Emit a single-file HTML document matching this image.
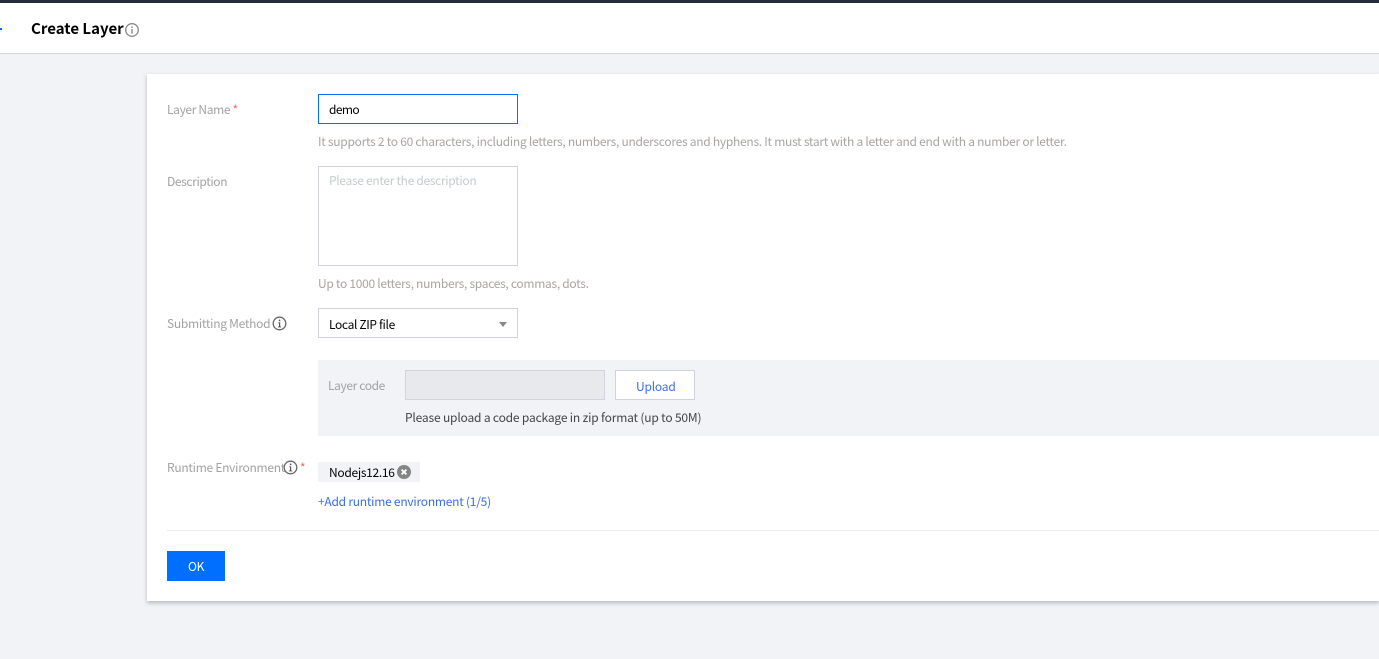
<!DOCTYPE html>
<html><head><meta charset="utf-8">
<style>
html,body{margin:0;padding:0}
body{width:1379px;height:659px;position:relative;overflow:hidden;background:#f2f3f7;font-family:"Noto Sans CJK SC","Liberation Sans",sans-serif;font-size:12px;color:#000;letter-spacing:-.27px}
.a{position:absolute;white-space:nowrap;line-height:18px}
.b{position:absolute;box-sizing:border-box}
.l{color:#a2a2a2}
.h{color:#a8a4a2}
svg{position:absolute;display:block}
</style></head><body>
<div class="b" style="left:0;top:0;width:1379px;height:3px;background:#242d3d"></div>
<div class="b" style="left:0;top:3px;width:1379px;height:51px;background:#fff;border-bottom:1px solid #d5d6de"></div>
<div class="b" style="left:0;top:28px;width:2px;height:2px;background:#006eff"></div>
<div class="a" style="left:31px;top:18px;font-size:15px;line-height:22px;font-weight:700;color:#000;letter-spacing:0">Create Layer</div>
<svg style="left:125px;top:23px" width="14" height="14" viewBox="0 0 14 14"><circle cx="7" cy="7" r="6.3" fill="none" stroke="#888" stroke-width="1.3"/><rect x="6.3" y="6" width="1.4" height="4.6" fill="#888"/><rect x="6.3" y="3.4" width="1.4" height="1.5" fill="#888"/></svg>

<div class="b" style="left:147px;top:74px;width:1232px;height:527px;background:#fff;box-shadow:0 2px 4px rgba(54,58,80,.32)"></div>

<div class="a l" style="left:167px;top:101px;letter-spacing:-.35px">Layer Name <span style="color:#f0696b">*</span></div>
<div class="b" style="left:318px;top:94px;width:200px;height:30px;border:1px solid #006eff;background:#fff"></div>
<div class="a" style="left:329px;top:101px;letter-spacing:-.6px">demo</div>
<div class="a h" style="left:318px;top:133px">It supports 2 to 60 characters, including letters, numbers, underscores and hyphens. It must start with a letter and end with a number or letter.</div>

<div class="a l" style="left:167px;top:173px;letter-spacing:-.37px">Description</div>
<div class="b" style="left:318px;top:166px;width:200px;height:100px;border:1px solid #cfd2dc;background:#fff"></div>
<div class="a" style="left:329px;top:172px;color:#c6cbd0;letter-spacing:-.31px">Please enter the description</div>
<div class="a h" style="left:318px;top:275px;letter-spacing:-.29px">Up to 1000 letters, numbers, spaces, commas, dots.</div>

<div class="a l" style="left:167px;top:315px">Submitting Method</div>
<svg style="left:272px;top:316px" width="15" height="15" viewBox="0 0 15 15"><circle cx="7.5" cy="7.5" r="6.3" fill="none" stroke="#666" stroke-width="1.3"/><path d="M6.3 6.4H8.2V10.5H9.2V11.4H6V10.5H7V7.3H6.3Z" fill="#555"/><rect x="6.8" y="3.6" width="1.5" height="1.6" fill="#555"/></svg>
<div class="b" style="left:318px;top:308px;width:200px;height:30px;border:1px solid #cfd2dc;background:#fff"></div>
<div class="a" style="left:329px;top:316px;letter-spacing:-.35px">Local ZIP file</div>
<div class="b" style="left:499px;top:322px;width:0;height:0;border-left:4px solid transparent;border-right:4px solid transparent;border-top:5px solid #888"></div>

<div class="b" style="left:318px;top:360px;width:1061px;height:76px;background:#f2f3f7"></div>
<div class="a l" style="left:328px;top:377px;letter-spacing:-.37px">Layer code</div>
<div class="b" style="left:405px;top:370px;width:200px;height:30px;background:#e7e9ed;border:1px solid #d0d4dd"></div>
<div class="b" style="left:615px;top:370px;width:80px;height:30px;background:#fff;border:1px solid #cfd2dc"></div>
<div class="a" style="left:636px;top:378px;color:#3d6cf0;letter-spacing:-.2px">Upload</div>
<div class="a" style="left:405px;top:409px;color:#444;letter-spacing:-.175px">Please upload a code package in zip format (up to 50M)</div>

<div class="a l" style="left:167px;top:459px">Runtime Environment</div>
<svg style="left:283px;top:460px" width="15" height="15" viewBox="0 0 15 15"><circle cx="7.5" cy="7.5" r="6.3" fill="none" stroke="#666" stroke-width="1.3"/><path d="M6.3 6.4H8.2V10.5H9.2V11.4H6V10.5H7V7.3H6.3Z" fill="#555"/><rect x="6.8" y="3.6" width="1.5" height="1.6" fill="#555"/></svg>
<div class="a" style="left:300px;top:459px;color:#f0696b">*</div>
<div class="b" style="left:318px;top:462px;width:102px;height:20px;background:#f2f3f7"></div>
<div class="a" style="left:329px;top:464px;letter-spacing:-.3px">Nodejs12.16</div>
<svg style="left:397px;top:465px" width="14" height="14" viewBox="0 0 14 14"><circle cx="7" cy="7" r="7" fill="#858585"/><path d="M4.6 4.6L9.4 9.4M9.4 4.6L4.6 9.4" stroke="#fff" stroke-width="1.8" fill="none"/></svg>
<div class="a" style="left:318px;top:493px;color:#3d6cf0;letter-spacing:-.24px">+Add runtime environment (1/5)</div>

<div class="b" style="left:167px;top:530px;width:1212px;height:1px;background:#e7eaef"></div>
<div class="b" style="left:167px;top:551px;width:58px;height:30px;background:#006eff"></div>
<div class="a" style="left:188px;top:558px;color:#fff">OK</div>
</body></html>
